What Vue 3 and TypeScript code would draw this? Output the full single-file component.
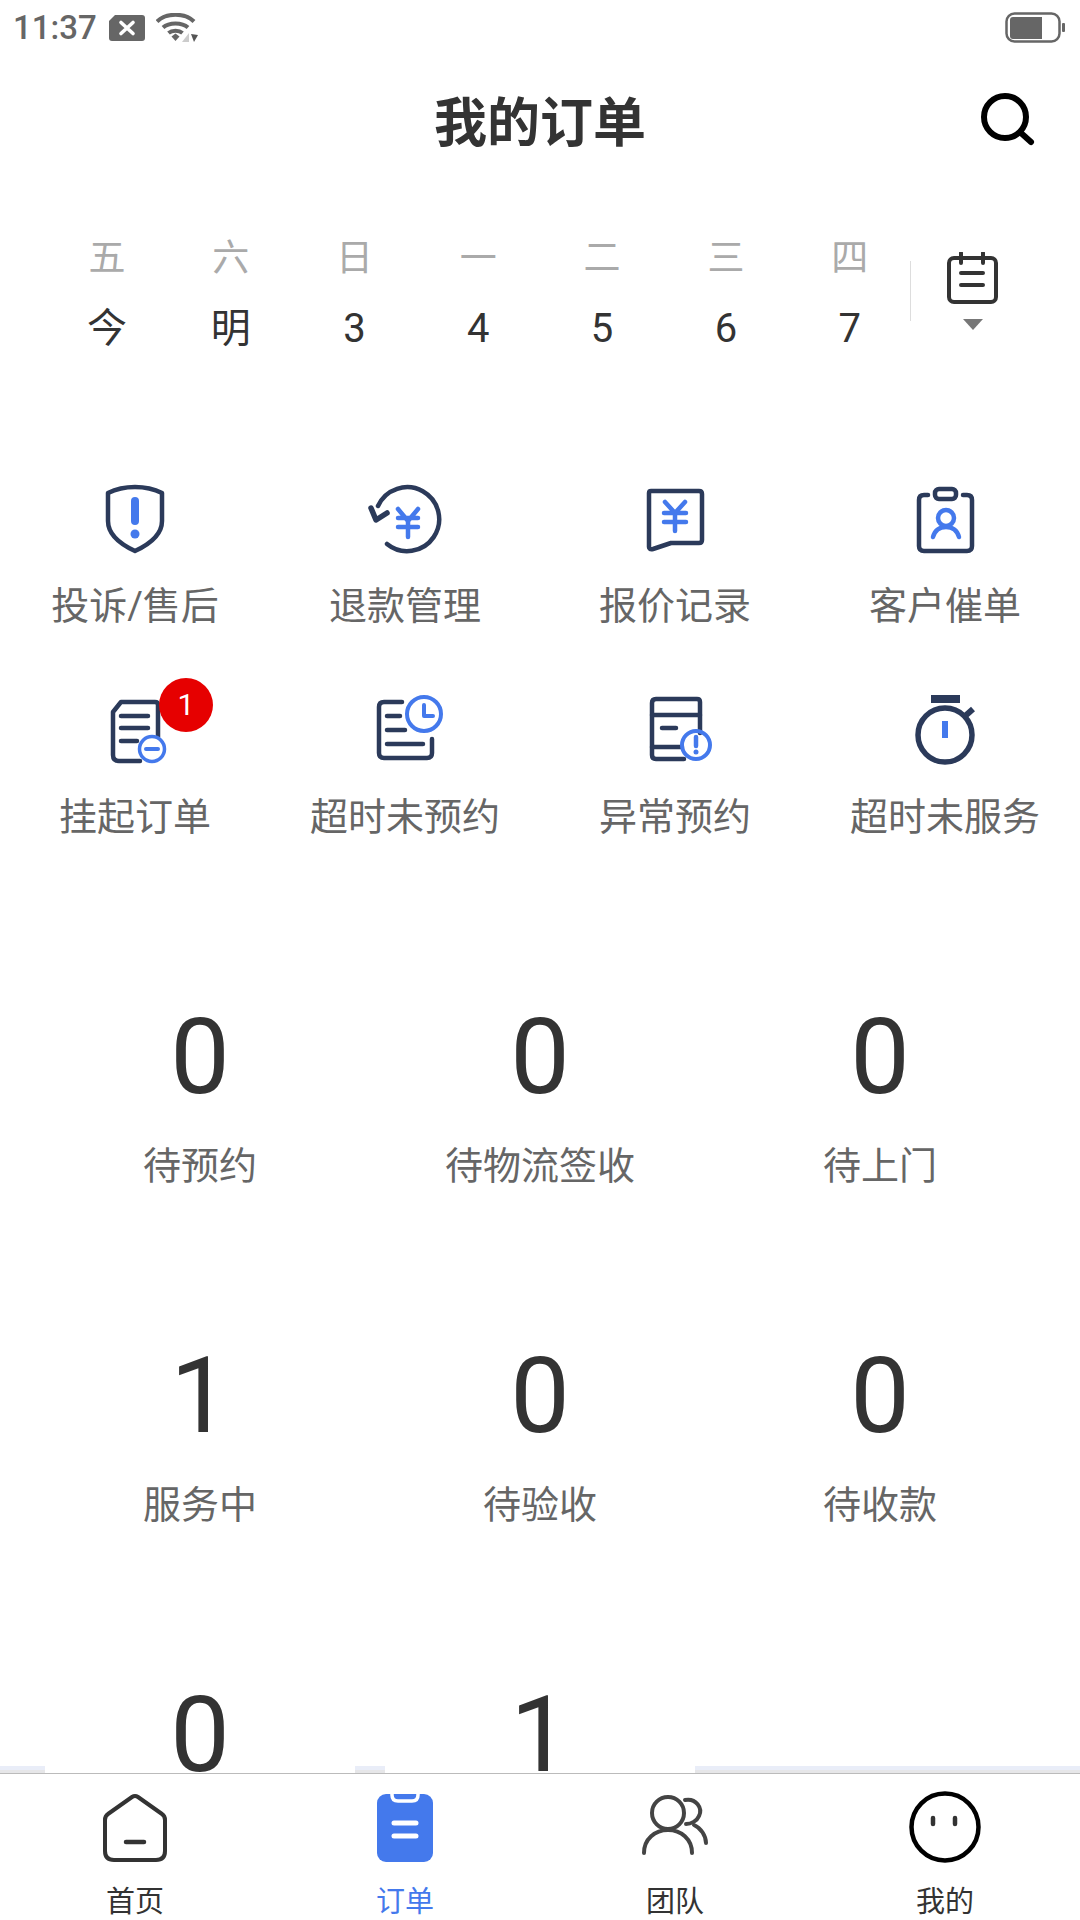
<script setup lang="ts">
interface Day {
  week: string
  date: string
}

interface Stat {
  count: number
  label?: string
}

const days: Day[] = [
  { week: '五', date: '今' },
  { week: '六', date: '明' },
  { week: '日', date: '3' },
  { week: '一', date: '4' },
  { week: '二', date: '5' },
  { week: '三', date: '6' },
  { week: '四', date: '7' }
]

// the last row is cut off by the tab bar, its labels never show
const stats: Stat[] = [
  { count: 0, label: '待预约' },
  { count: 0, label: '待物流签收' },
  { count: 0, label: '待上门' },
  { count: 1, label: '服务中' },
  { count: 0, label: '待验收' },
  { count: 0, label: '待收款' },
  { count: 0 },
  { count: 1 }
]
</script>

<template>
  <div class="page">
    <div class="status">
      <span class="status__time">11:37</span>
      <svg class="status__sim" width="36" height="26" viewBox="0 0 36 26">
        <path d="M6 0H33Q36 0 36 3V23Q36 26 33 26H3Q0 26 0 23V6Z" fill="#666" />
        <path d="M12 7.5L24 18.5M24 7.5L12 18.5" stroke="#fff" stroke-width="3.6" stroke-linecap="round" />
      </svg>
      <svg class="status__wifi" width="42" height="30" viewBox="0 0 42 30">
        <path d="M1 8.5C10-.5 29-.5 38 8.5" fill="none" stroke="#666" stroke-width="4" />
        <path d="M7 14.5C13 9 26 9 32 14.5" fill="none" stroke="#666" stroke-width="4" />
        <path d="M12.5 20C16 17 23 17 26.5 20" fill="none" stroke="#666" stroke-width="4" />
        <path d="M15.5 23.5L19.5 20.5L23.5 23.5L19.5 28Z" fill="#666" />
        <path d="M26 29L33 20V29Z" fill="#ccc" />
        <path d="M35 21L42 22L38 29Z" fill="#555" />
      </svg>
      <span class="status__space"></span>
      <svg class="status__battery" width="60" height="32" viewBox="0 0 60 32">
        <rect x="1.5" y="1.5" width="53" height="28" rx="8" fill="none" stroke="#666" stroke-width="2.5" />
        <path d="M8 5H37V27H8Q5 27 5 24V8Q5 5 8 5Z" fill="#666" />
        <rect x="57" y="11" width="3" height="9" rx="1" fill="#666" />
      </svg>
    </div>

    <header class="header">
      <h1 class="header__title">我的订单</h1>
      <svg class="header__search" width="56" height="56" viewBox="0 0 56 56">
        <circle cx="25" cy="27" r="21" fill="none" stroke="#000" stroke-width="6" />
        <path d="M41 43L51 52" stroke="#000" stroke-width="6" stroke-linecap="round" />
      </svg>
    </header>

    <section class="week">
      <div class="week__days">
        <div v-for="day in days" :key="day.week" class="day">
          <span class="day__week">{{ day.week }}</span>
          <span class="day__date">{{ day.date }}</span>
        </div>
      </div>
      <span class="week__line"></span>
      <div class="week__cal">
        <svg width="52" height="52" viewBox="0 0 52 52">
          <rect x="3" y="6" width="47" height="44" rx="5" fill="none" stroke="#333" stroke-width="4" />
          <path d="M15 1V11M37 1V11M15 21H37M15 33H37" stroke="#333" stroke-width="4" stroke-linecap="round" />
        </svg>
        <span class="week__arrow"></span>
      </div>
    </section>

    <main class="main">
      <section class="menu">
        <div class="menu__item">
          <svg class="menu__icon" width="58" height="72" viewBox="0 -2 58 72" stroke-width="4.5" stroke-linecap="round" stroke-linejoin="round">
            <path class="navy" d="M29 2C38 2 48 4 56 8V36C56 50 42 60 29 66C16 60 2 50 2 36V8C10 4 20 2 29 2Z" />
            <path class="blue" stroke-width="8" d="M29 16V36" />
            <circle cx="29" cy="49" r="4.5" fill="#4479ec" />
          </svg>
          <span class="menu__label">投诉/售后</span>
        </div>
        <div class="menu__item">
          <svg class="menu__icon" width="80" height="72" viewBox="0 -1 80 72" stroke-width="4.5" stroke-linecap="round" stroke-linejoin="round">
            <path class="navy" d="M22 60A32 32 0 1 0 13 22" />
            <path class="navy" stroke-width="5.5" d="M6 24L11 36L22 29" />
            <path class="blue" d="M33 25L43 37L53 25M33 34H53M33 43H53M43 37V53" />
          </svg>
          <span class="menu__label">退款管理</span>
        </div>
        <div class="menu__item">
          <svg class="menu__icon" width="60" height="72" viewBox="0 -4 60 72" stroke-width="4.5" stroke-linecap="round" stroke-linejoin="round">
            <path class="navy" d="M4 6Q4 4 6 4H54Q57 4 57 7V53Q57 56 54 56H26L8 62Q4 63 4 60Z" />
            <path class="blue" d="M20 15L30 26L40 15M19 26H41M19 35H41M30 26V44" />
          </svg>
          <span class="menu__label">报价记录</span>
        </div>
        <div class="menu__item">
          <svg class="menu__icon" width="60" height="72" viewBox="0 -2 60 72" stroke-width="4.5" stroke-linecap="round" stroke-linejoin="round">
            <path class="navy" d="M13 10H9Q4 10 4 15V61Q4 66 9 66H52Q57 66 57 61V15Q57 10 52 10H48" />
            <rect class="navy" x="20" y="4" width="21" height="10" rx="4" />
            <circle class="blue" cx="31" cy="33" r="8" />
            <path class="blue" d="M18 52C20 45 25 42 31 42C37 42 42 45 44 52" />
          </svg>
          <span class="menu__label">客户催单</span>
        </div>

        <div class="menu__item">
          <div class="menu__wrap">
            <svg class="menu__icon" width="60" height="72" viewBox="-3 -3 60 72" stroke-width="4.5" stroke-linecap="round" stroke-linejoin="round">
              <path class="navy" d="M50 40V8Q50 5 47 5H13L5 15V58Q5 64 11 64H32" />
              <path class="navy" d="M13 19H40M13 31H40M13 44H29" />
              <circle class="blue" cx="44" cy="52" r="12.5" stroke-width="3.5" />
              <path class="blue" stroke-width="4" d="M38 52H50" />
            </svg>
            <span class="badge">1</span>
          </div>
          <span class="menu__label">挂起订单</span>
        </div>
        <div class="menu__item">
          <svg class="menu__icon" width="80" height="72" viewBox="-10 1 80 72" stroke-width="4.5" stroke-linecap="round" stroke-linejoin="round">
            <path class="navy" d="M27 9H9Q4 9 4 14V60Q4 65 9 65H52Q57 65 57 60V46" />
            <path class="navy" d="M12 23H25M12 37H30M12 51H48" />
            <circle class="blue" cx="49" cy="21" r="17" stroke-width="4" />
            <path class="blue" stroke-width="4" d="M49 12V23H58" />
          </svg>
          <span class="menu__label">超时未预约</span>
        </div>
        <div class="menu__item">
          <svg class="menu__icon" width="80" height="72" viewBox="-13 -1 80 72" stroke-width="4.5" stroke-linecap="round" stroke-linejoin="round">
            <path class="navy" d="M52 38V7Q52 4 49 4H8Q4 4 4 8V60Q4 64 8 64H36" />
            <path class="navy" d="M4 20H52M14 33H28M4 52H34" />
            <circle class="blue" cx="48" cy="50" r="14" stroke-width="4" />
            <path class="blue" d="M48 42V51" />
            <circle cx="48" cy="57" r="2.5" fill="#4479ec" />
          </svg>
          <span class="menu__label">异常预约</span>
        </div>
        <div class="menu__item">
          <svg class="menu__icon" width="60" height="72" viewBox="0 1 60 72" stroke-linejoin="round">
            <rect x="16" y="2" width="29" height="8" fill="#2b3a5a" />
            <circle class="navy" cx="30" cy="42" r="27" stroke-width="5.5" />
            <path class="navy" stroke-width="6" d="M49 24L58 16" />
            <path class="blue" stroke-width="6" d="M30 28V45" />
          </svg>
          <span class="menu__label">超时未服务</span>
        </div>
      </section>

      <section class="stats">
        <div v-for="(stat, i) in stats" :key="i" class="stat">
          <span class="stat__count">{{ stat.count }}</span>
          <span v-if="stat.label" class="stat__label">{{ stat.label }}</span>
        </div>
      </section>

      <div class="edge">
        <span class="edge__part edge__part--a"></span>
        <span class="edge__part edge__part--b"></span>
        <span class="edge__part edge__part--c"></span>
      </div>
    </main>

    <nav class="tabs">
      <div class="tab">
        <svg class="tab__icon" width="64" height="72" viewBox="0 -3 64 72">
          <path d="M29 3Q32 1 35 3L59 20Q62 22 62 26V57Q62 66 53 66H11Q2 66 2 57V26Q2 22 5 20Z" fill="none" stroke="#333" stroke-width="4" />
          <path d="M23 48H41" stroke="#333" stroke-width="4.5" stroke-linecap="round" />
        </svg>
        <span class="tab__label">首页</span>
      </div>
      <div class="tab tab--active">
        <svg class="tab__icon" width="56" height="72" viewBox="0 -3 56 72">
          <rect x="0" y="0" width="56" height="68" rx="9" fill="#4479ec" />
          <path d="M15 0V1Q15 7 21 7H35Q41 7 41 1V0" fill="none" stroke="#fff" stroke-width="3.5" />
          <path d="M17 29H39M17 42H39" stroke="#fff" stroke-width="5" stroke-linecap="round" />
        </svg>
        <span class="tab__label">订单</span>
      </div>
      <div class="tab">
        <svg class="tab__icon" width="68" height="72" viewBox="0 -4 68 72">
          <g fill="none" stroke="#444" stroke-width="4" stroke-linecap="round">
            <circle cx="27" cy="18" r="16" />
            <path d="M3 58C3 44 14 35 27 35C40 35 51 44 51 58" />
            <path d="M44 5C55 3 62 13 58 21C56 26 50 29 45 29" />
            <path d="M53 30C60 33 65 41 65 48" />
          </g>
        </svg>
        <span class="tab__label">团队</span>
      </div>
      <div class="tab">
        <svg class="tab__icon" width="72" height="72" viewBox="0 0 72 72">
          <circle cx="36" cy="36" r="33.5" fill="none" stroke="#000" stroke-width="4.5" />
          <path d="M24 27V33M46 27V33" stroke="#333" stroke-width="4.5" stroke-linecap="round" />
        </svg>
        <span class="tab__label">我的</span>
      </div>
    </nav>
  </div>
</template>

<style scoped>
.page {
  width: 1080px;
  height: 1920px;
  display: flex;
  flex-direction: column;
  overflow: hidden;
  background: #fff;
  font-family: Roboto, "Noto Sans CJK SC", sans-serif;
  color: #333;
}

.status {
  height: 56px;
  flex: none;
  display: flex;
  align-items: center;
  padding: 0 15px 0 13px;
}

.status__time {
  font-size: 33px;
  font-weight: 500;
  line-height: 56px;
  color: #666;
}

.status__sim {
  margin-left: 12px;
}

.status__wifi {
  margin-left: 11px;
}

.status__space {
  flex: 1;
}

.header {
  height: 132px;
  flex: none;
  display: flex;
  align-items: center;
  justify-content: center;
  position: relative;
  padding-top: 4px;
  box-sizing: border-box;
}

.header__title {
  margin: 0;
  font-size: 53px;
  line-height: 64px;
  font-weight: 700;
  color: #333;
}

.header__search {
  position: absolute;
  left: 980px;
  top: 34px;
}

.week {
  flex: none;
  display: flex;
  align-items: flex-start;
  padding: 51px 0 0 45px;
  height: 164px;
  box-sizing: border-box;
}

.week__days {
  width: 865px;
  flex: none;
  display: grid;
  grid-template-columns: repeat(7, 123.8px);
}

.day {
  display: flex;
  flex-direction: column;
  align-items: center;
  gap: 25px;
}

.day__week {
  font-size: 37px;
  line-height: 40px;
  color: #aaa;
}

.day__date {
  font-size: 40px;
  line-height: 50px;
  color: #333;
}

.week__line {
  width: 1px;
  height: 60px;
  margin-top: 22px;
  flex: none;
  background: #ddd;
}

.week__cal {
  width: 122px;
  margin-top: 13px;
  display: flex;
  flex-direction: column;
  align-items: center;
}

.week__arrow {
  width: 0;
  height: 0;
  margin-top: 15px;
  margin-left: 2px;
  border-left: 10px solid transparent;
  border-right: 10px solid transparent;
  border-top: 11px solid #777;
}

.main {
  flex: 1;
  min-height: 0;
  position: relative;
  overflow: hidden;
}

.menu {
  display: grid;
  grid-template-columns: repeat(4, 1fr);
  row-gap: 63px;
  padding-top: 131px;
}

.menu__item {
  display: flex;
  flex-direction: column;
  align-items: center;
  gap: 26px;
}

.menu__wrap {
  position: relative;
  height: 72px;
}

.menu__icon {
  display: block;
  overflow: visible;
}

.navy {
  fill: none;
  stroke: #2b3a5a;
}

.blue {
  fill: none;
  stroke: #4479ec;
}

.menu__label {
  font-size: 38px;
  line-height: 50px;
  color: #666;
  white-space: nowrap;
}

.badge {
  position: absolute;
  left: 54px;
  top: -16px;
  width: 54px;
  height: 54px;
  border-radius: 50%;
  background: #e60000;
  color: #fff;
  font-size: 30px;
  line-height: 54px;
  text-align: center;
}

.stats {
  display: grid;
  grid-template-columns: repeat(3, 310px);
  column-gap: 30px;
  row-gap: 144px;
  padding: 154px 0 0 45px;
}

.stat {
  position: relative;
  z-index: 1;
  display: flex;
  flex-direction: column;
  align-items: center;
  gap: 25px;
  background: #fff;
}

.stat__count {
  font-size: 106px;
  line-height: 120px;
  padding-top: 1px;
  margin-bottom: -1px;
  color: #333;
}

.stat__label {
  font-size: 38px;
  line-height: 50px;
  color: #666;
}

.edge {
  position: absolute;
  left: 0;
  right: 0;
  bottom: 0;
  height: 7px;
  display: flex;
}

.edge__part {
  display: block;
  height: 7px;
  background: linear-gradient(#e9edf8 0 4px, #e6e6e8 4px);
}

.edge__part--a {
  width: 45px;
}

.edge__part--b {
  width: 30px;
  margin-left: 310px;
}

.edge__part--c {
  flex: 1;
  margin-left: 310px;
}

.tabs {
  height: 147px;
  flex: none;
  box-sizing: border-box;
  display: grid;
  grid-template-columns: repeat(4, 1fr);
  padding-top: 17px;
  border-top: 1px solid #bbb;
  background: #fff;
}

.tab {
  display: flex;
  flex-direction: column;
  align-items: center;
  gap: 21px;
}

.tab__icon {
  display: block;
  overflow: visible;
}

.tab__label {
  font-size: 29px;
  line-height: 36px;
  color: #333;
}

.tab--active .tab__label {
  color: #4479ec;
}
</style>
